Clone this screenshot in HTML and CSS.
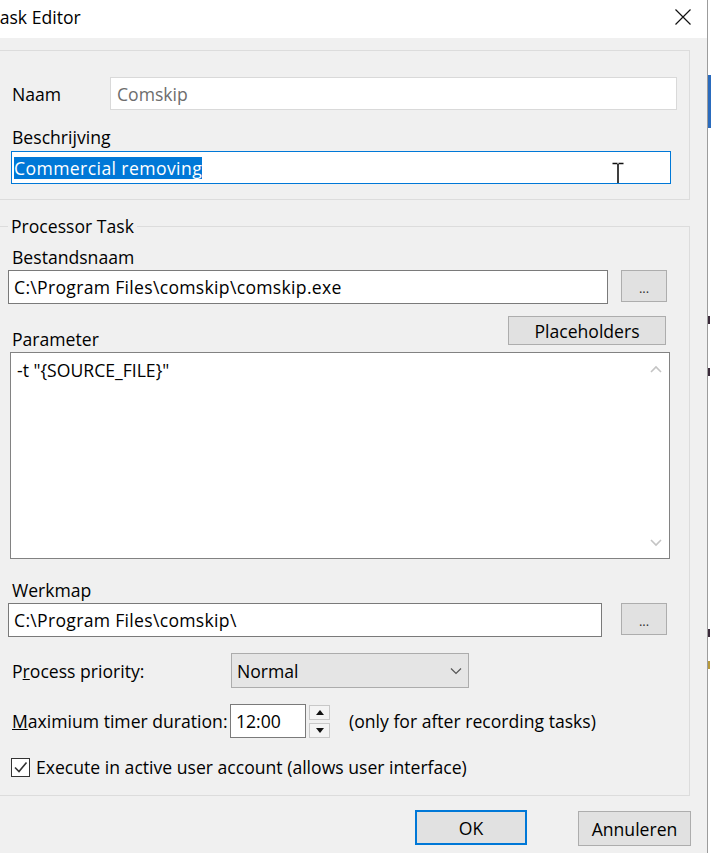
FILE: index.html
```html
<!DOCTYPE html>
<html lang="nl">
<head>
<meta charset="utf-8">
<title>Task Editor</title>
<link rel="stylesheet" href="styles.css">
</head>
<body>
<div class="screen">
  <div class="dialog">
    <div class="titlebar">
      <span class="title">Task Editor</span>
      <svg class="close" width="16" height="16" viewBox="0 0 16 16"><path d="M0.5 0.5L15.5 15.5M15.5 0.5L0.5 15.5" stroke="#111" stroke-width="1.2" fill="none"/></svg>
    </div>
    <div class="content">
      <div class="group group-top">
        <div class="naam-row">
          <span class="lbl naam-lbl">Naam</span>
          <div class="field field-ro naam-field">Comskip</div>
        </div>
        <div class="lbl lbl-block beschr-lbl">Beschrijving</div>
        <div class="field field-focus beschr-field">
          <span class="sel">Commercial removing</span>
          <svg class="ibeam" width="12" height="26" viewBox="0 0 12 26"><path d="M0.5 1.5H5.5M6.5 1.5H11.5M6 2V24M0.5 24.5H5.5M6.5 24.5H11.5" stroke="#111" stroke-width="1.6" fill="none"/></svg>
        </div>
      </div>

      <fieldset class="group group-proc">
        <legend class="legend">Processor Task</legend>
        <div class="lbl lbl-block bestand-lbl">Bestandsnaam</div>
        <div class="path-row">
          <div class="field field-dark path-field bestand-field">C:\Program Files\comskip\comskip.exe</div>
          <button class="btn btn-dots">...</button>
        </div>
        <div class="param-row">
          <span class="lbl param-lbl">Parameter</span>
          <button class="btn btn-place">Placeholders</button>
        </div>
        <div class="memo">
          <div class="memo-text">-t "{SOURCE_FILE}"</div>
          <div class="memo-scroll">
            <svg width="12" height="8" viewBox="0 0 12 8"><path d="M1 7L6 2L11 7" stroke="#c4c4c4" stroke-width="1.6" fill="none"/></svg>
            <svg width="12" height="8" viewBox="0 0 12 8"><path d="M1 1L6 6L11 1" stroke="#c4c4c4" stroke-width="1.6" fill="none"/></svg>
          </div>
        </div>
        <div class="lbl lbl-block werk-lbl">Werkmap</div>
        <div class="path-row werk-row">
          <div class="field field-dark path-field werk-field">C:\Program Files\comskip\</div>
          <button class="btn btn-dots">...</button>
        </div>
        <div class="prio-row">
          <span class="lbl prio-lbl">P<u>r</u>ocess priority:</span>
          <div class="combo">
            <span>Normal</span>
            <svg width="12" height="8" viewBox="0 0 12 8"><path d="M1 1.5L6 6.5L11 1.5" stroke="#555" stroke-width="1.2" fill="none"/></svg>
          </div>
        </div>
        <div class="timer-row">
          <span class="lbl timer-lbl"><u>M</u>aximium timer duration:</span>
          <div class="field field-dark timer-field">12:00</div>
          <div class="spin">
            <div class="spin-btn"><svg width="8" height="5" viewBox="0 0 8 5"><path d="M0 5L4 0L8 5Z" fill="#111"/></svg></div>
            <div class="spin-btn"><svg width="8" height="5" viewBox="0 0 8 5"><path d="M0 0L4 5L8 0Z" fill="#111"/></svg></div>
          </div>
          <span class="lbl timer-note">(only for after recording tasks)</span>
        </div>
        <div class="check-row">
          <span class="checkbox"><svg width="17" height="17" viewBox="0 0 17 17"><path d="M3 8.5L7 12.5L14.5 3.5" stroke="#333" stroke-width="1.6" fill="none"/></svg></span>
          <span class="lbl check-lbl">Execute in active user account (allows user interface)</span>
        </div>
      </fieldset>

      <div class="actions">
        <button class="btn btn-ok">OK</button>
        <button class="btn btn-cancel">Annuleren</button>
      </div>
    </div>
  </div>
  <div class="backapp">
    <div class="back-blue"></div>
    <div class="back-mark m1"></div>
    <div class="back-mark m2"></div>
    <div class="back-mark m3"></div>
    <div class="back-mark m4"></div>
  </div>
</div>
</body>
</html>
```
FILE: styles.css
```css
* { box-sizing: border-box; }
html, body { margin: 0; padding: 0; }
body {
  width: 711px;
  height: 853px;
  overflow: hidden;
  background: #f0f0f0;
  font-family: "Segoe UI", "Open Sans", "Noto Sans", sans-serif;
  font-size: 17.6px;
  line-height: 20px;
  color: #000;
}
.screen {
  display: grid;
  grid-template-columns: 708px 3px;
  width: 711px;
  height: 853px;
  overflow: hidden;
}
.dialog {
  width: 718px;
  margin-left: -10px;
  height: 853px;
  background: #f0f0f0;
  border-right: 1px solid #9c9c9c;
}
.titlebar {
  height: 38px;
  background: #fff;
  display: flex;
  justify-content: space-between;
  align-items: flex-start;
  padding: 7px 16px 0 0;
}
.title { line-height: 20px; }
.close { margin-top: 2px; }

.content { padding: 12px 17px 0 6px; }

.group {
  border: 1px solid #dcdcdc;
}
.group-top {
  height: 150px;
  padding: 26px 18px 0 15px;
}
.lbl { white-space: nowrap; }
.lbl-block { display: block; }
.naam-row {
  display: flex;
  align-items: center;
  height: 33px;
}
.naam-lbl { flex: 0 0 98px; }
.field {
  flex-shrink: 0;
  background: #fff;
  border: 1px solid #7a7a7a;
  display: flex;
  align-items: center;
  white-space: nowrap;
  overflow: hidden;
}
.field-ro {
  border-color: #d9d9d9;
  color: #6d6d6d;
}
.naam-field {
  width: 567px;
  height: 33px;
  padding-left: 6px;
}
.beschr-lbl { margin-top: 17px; }
.field-focus { border-color: #0078d7; }
.beschr-field {
  position: relative;
  margin-top: 4px;
  margin-left: -1px;
  width: 660px;
  height: 33px;
  padding-left: 2px;
}
.sel {
  background: #0078d7;
  color: #fff;
  line-height: 22px;
  letter-spacing: 0.4px;
}
.ibeam {
  position: absolute;
  left: 600px;
  top: 10px;
}

.group-proc {
  margin: 16px 0 0 0;
  padding: 0 18px 18px 11px;
  min-width: 0;
}
.legend {
  padding: 0 3px;
  margin-left: 0;
  line-height: 20px;
}
.bestand-lbl { margin-top: 11px; padding-left: 4px; }
.path-row {
  display: flex;
  align-items: flex-start;
  margin-top: 3px;
}
.field-dark { border-color: #7a7a7a; }
.path-field { letter-spacing: 0.3px; }
.bestand-field {
  width: 600px;
  height: 34px;
  padding-left: 5px;
}
.btn {
  font: inherit;
  color: #000;
  background: #e1e1e1;
  border: 1px solid #adadad;
  border-radius: 0;
  padding: 0;
  margin: 0;
  flex-shrink: 0;
}
.btn-dots {
  width: 46px;
  height: 32px;
  margin-left: 13px;
  font-size: 13px;
  color: #333;
  padding-top: 4px;
}
.param-row {
  display: flex;
  justify-content: space-between;
  align-items: flex-end;
  margin-top: 12px;
  height: 29px;
}
.param-lbl { padding-left: 4px; margin-bottom: -4px; }
.btn-place {
  width: 158px;
  height: 29px;
  margin-right: 5px;
}
.memo {
  display: flex;
  margin-top: 7px;
  margin-left: 2px;
  width: 660px;
  height: 207px;
  background: #fff;
  border: 1px solid #828282;
}
.memo-text {
  flex: 1;
  padding: 7px 0 0 6px;
}
.memo-scroll {
  flex: 0 0 20px;
  display: flex;
  flex-direction: column;
  justify-content: space-between;
  align-items: center;
  padding: 12px 6px 11px 0;
}
.werk-lbl { margin-top: 21px; padding-left: 4px; }
.werk-row { margin-top: 3px; }
.werk-field {
  width: 594px;
  height: 34px;
  padding-left: 5px;
}
.werk-row .btn-dots { margin-left: 19px; }
.prio-row {
  display: flex;
  align-items: center;
  margin-top: 16px;
  height: 35px;
}
.prio-lbl { flex: 0 0 223px; padding-left: 4px; }
.combo {
  width: 238px;
  height: 35px;
  background: #e5e5e5;
  border: 1px solid #acacac;
  display: flex;
  align-items: center;
  justify-content: space-between;
  padding: 0 6px 0 5px;
}
.timer-row {
  display: flex;
  align-items: center;
  margin-top: 16px;
  height: 34px;
}
.timer-lbl { flex: 0 0 222px; padding-left: 4px; }
.timer-field {
  width: 76px;
  height: 34px;
  padding-left: 5px;
}
.spin {
  display: flex;
  flex-direction: column;
  justify-content: space-between;
  margin-left: 3px;
  height: 33px;
  width: 21px;
}
.spin-btn {
  height: 15px;
  background: #f4f4f4;
  border: 1px solid #c8c8c8;
  display: flex;
  align-items: center;
  justify-content: center;
}
.timer-note { margin-left: 19px; }
.check-row {
  display: flex;
  align-items: center;
  margin-top: 19px;
  height: 20px;
}
.checkbox {
  width: 19px;
  height: 19px;
  margin-left: 3px;
  background: #fff;
  border: 1px solid #333;
  display: flex;
  align-items: center;
  justify-content: center;
}
.check-lbl { margin-left: 6px; }

.actions {
  display: flex;
  justify-content: flex-end;
  gap: 51px;
  margin-top: 14px;
}
.btn-ok {
  width: 112px;
  height: 35px;
  border: 2px solid #0078d7;
}
.btn-cancel {
  width: 113px;
  height: 35px;
  margin-top: 1px;
  margin-right: -1px;
}

.backapp {
  background: #fff;
  height: 853px;
}
.back-blue {
  margin-top: 75px;
  height: 53px;
  background: #2a6bbd;
}
.back-mark {
  height: 8px;
  width: 2px;
  background: #3a2a3a;
}
.m1 { margin-top: 188px; }
.m2 { margin-top: 44px; }
.m3 { margin-top: 253px; }
.m4 { margin-top: 24px; background: #b89a3a; }
```
